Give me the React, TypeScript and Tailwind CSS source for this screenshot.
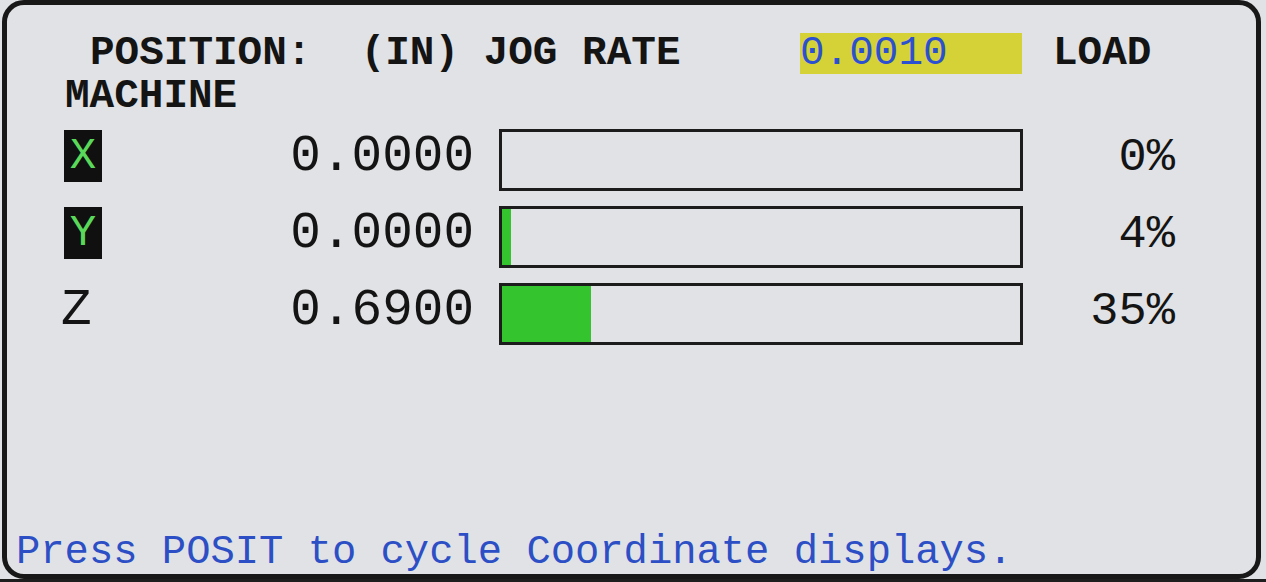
import React from 'react';

const axes = [
  { name: 'X', value: '0.0000', load: 0, fill: 0, active: true },
  { name: 'Y', value: '0.0000', load: 4, fill: 9, active: true },
  { name: 'Z', value: '0.6900', load: 35, fill: 89, active: false },
];

export default function App() {
  return (
    <div className="w-[1266px] h-[582px] bg-[#e0e2e5] overflow-hidden font-['Liberation_Mono',monospace] text-[#141414]">
      <div className="ml-[2px] w-[1259px] h-[579px] border-[5px] border-[#181818] rounded-[22px] flex flex-col">
        {/* Main content */}
        <div className="pl-[57px] pt-[27px]">
          {/* Header */}
          <div className="ml-[26px] flex items-center h-[43px] text-[41px] leading-[43px] font-bold">
            <span className="w-[710px] whitespace-pre">POSITION:  (IN) JOG RATE</span>
            <span className="w-[222px] h-[41px] bg-[#d5d238] text-[#2c50d2] font-normal leading-[41px]">0.0010</span>
            <span className="ml-[31px]">LOAD</span>
          </div>
          <div className="ml-[1px] h-[43px] text-[41px] leading-[43px] font-bold">MACHINE</div>

          {/* Axis rows */}
          <div className="mt-[11px] flex flex-col gap-[15px]">
            {axes.map((a) => (
              <div key={a.name} className="flex h-[62px]">
                <div className="w-[38px]">
                  {a.active ? (
                    <div className="mt-[1px] w-[38px] h-[52px] bg-[#101010] text-[#5ad85a] text-[44px] leading-[52px] text-center">
                      {a.name}
                    </div>
                  ) : (
                    <div className="-ml-[3px] text-[51px] leading-[56px]">{a.name}</div>
                  )}
                </div>
                <div className="w-[372px] text-right text-[51px] leading-[56px]">{a.value}</div>
                <div className="ml-[25px] w-[524px] h-[62px] border-[3px] border-[#1c1c1c] flex">
                  <div className="h-full bg-[#33c42e]" style={{ width: a.fill }} />
                </div>
                <div className="w-[152px] text-right text-[47px] leading-[58px]">{a.load}%</div>
              </div>
            ))}
          </div>
        </div>

        {/* Footer hint */}
        <div className="mt-auto pl-[9px] pb-[2px] h-[43px] text-[40.5px] leading-[43px] text-[#2d4fc6] whitespace-pre">
          Press POSIT to cycle Coordinate displays.
        </div>
      </div>
      <div className="h-[3px] bg-[#1e1e1e]" />
    </div>
  );
}
